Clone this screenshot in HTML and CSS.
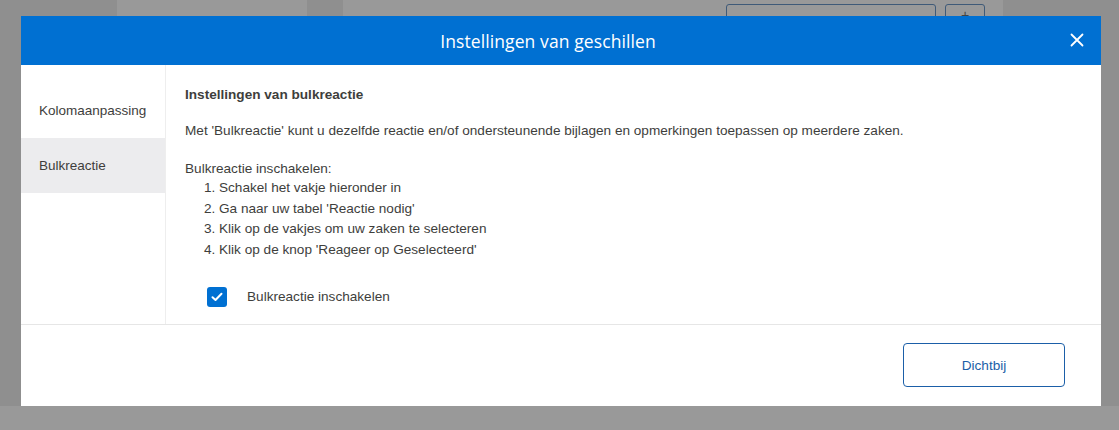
FILE: index.html
```html
<!DOCTYPE html>
<html lang="nl">
<head>
<meta charset="utf-8">
<title>Instellingen van geschillen</title>
<link rel="stylesheet" href="styles.css">
</head>
<body>
<div class="backdrop">
  <div class="strip dark w1"></div>
  <div class="strip light w2"></div>
  <div class="strip dark w3"></div>
  <div class="strip light w4">
    <div class="bg-tools">
      <div class="bg-field"></div>
      <div class="bg-btn"><span class="bg-plus">+</span></div>
    </div>
  </div>
  <div class="strip dark w5"></div>
</div>

<div class="modal" role="dialog" aria-label="Instellingen van geschillen">
  <header class="modal-header">
    <h1 class="modal-title">Instellingen van geschillen</h1>
    <button class="close" aria-label="Sluiten">
      <svg width="14" height="14" viewBox="0 0 14 14"><path d="M1.5 1.5 L12.5 12.5 M12.5 1.5 L1.5 12.5" stroke="#fff" stroke-width="1.8" stroke-linecap="round"/></svg>
    </button>
  </header>
  <div class="modal-body">
    <nav class="sidebar">
      <div class="nav-item">Kolomaanpassing</div>
      <div class="nav-item active">Bulkreactie</div>
    </nav>
    <section class="content">
      <h2 class="content-title">Instellingen van bulkreactie</h2>
      <p class="intro">Met 'Bulkreactie' kunt u dezelfde reactie en/of ondersteunende bijlagen en opmerkingen toepassen op meerdere zaken.</p>
      <p class="steps-title">Bulkreactie inschakelen:</p>
      <ol class="steps">
        <li>Schakel het vakje hieronder in</li>
        <li>Ga naar uw tabel 'Reactie nodig'</li>
        <li>Klik op de vakjes om uw zaken te selecteren</li>
        <li>Klik op de knop 'Reageer op Geselecteerd'</li>
      </ol>
      <label class="check-row">
        <span class="checkbox">
          <svg width="12" height="10" viewBox="0 0 12 10"><path d="M1.5 5.2 L4.5 8 L10.5 1.8" fill="none" stroke="#fff" stroke-width="2" stroke-linecap="round" stroke-linejoin="round"/></svg>
        </span>
        <span class="check-label">Bulkreactie inschakelen</span>
      </label>
    </section>
  </div>
  <footer class="modal-footer">
    <button class="btn-outline">Dichtbij</button>
  </footer>
</div>
</body>
</html>
```
FILE: styles.css
```css
* { box-sizing: border-box; }
html, body { margin: 0; padding: 0; }
body {
  width: 1119px;
  height: 430px;
  overflow: hidden;
  background: #999999;
  font-family: "Liberation Sans", Arial, sans-serif;
  position: relative;
}
.backdrop {
  display: flex;
  height: 406px;
}
.strip { height: 100%; }
.dark { background: #8f8f8f; }
.light { background: #999999; }
.w1 { width: 117px; }
.w2 { width: 190px; }
.w3 { width: 36px; }
.w4 { width: 660px; }
.w5 { flex: 1; }
.bg-tools {
  display: flex;
  gap: 9px;
  padding: 4px 0 0 383px;
}
.bg-field {
  width: 210px;
  height: 30px;
  border: 1px solid #3f5a78;
  border-radius: 3px;
}
.bg-btn {
  width: 40px;
  height: 30px;
  border: 1px solid #3f5a78;
  border-radius: 3px;
  text-align: center;
  color: #444;
  font-size: 14px;
  line-height: 20px;
}
.modal {
  position: absolute;
  top: 16px;
  left: 21px;
  width: 1080px;
  height: 390px;
  background: #fff;
  display: flex;
  flex-direction: column;
}
.modal-header {
  height: 49px;
  background: #0070d2;
  display: flex;
  align-items: center;
  justify-content: center;
  padding-right: 26px;
  position: relative;
}
.modal-title {
  margin: 0;
  font-family: "Open Sans", "Liberation Sans", sans-serif;
  font-weight: 400;
  font-size: 17.5px;
  color: #fff;
  letter-spacing: 0.1px;
}
.close {
  position: absolute;
  right: 17px;
  top: 17px;
  width: 14px;
  height: 14px;
  padding: 0;
  border: 0;
  background: none;
  display: flex;
}
.modal-body {
  display: flex;
  height: 260px;
  border-bottom: 1px solid #e6e6e6;
}
.sidebar {
  width: 145px;
  border-right: 1px solid #eeeeee;
  padding-top: 18px;
}
.nav-item {
  height: 55px;
  display: flex;
  align-items: center;
  padding-left: 18px;
  font-size: 13.5px;
  color: #3e3e3c;
}
.nav-item.active { background: #ececee; }
.content {
  flex: 1;
  padding: 21px 19px 0;
  color: #3e3e3c;
  font-size: 13.6px;
}
.content-title {
  margin: 0 0 18px;
  font-size: 13.6px;
  font-weight: 700;
  line-height: 18px;
}
.intro {
  margin: 0 0 20px;
  line-height: 18px;
}
.steps-title {
  margin: 0;
  line-height: 18px;
}
.steps {
  margin: 0;
  padding-left: 34px;
  line-height: 20.6px;
}
.check-row {
  display: flex;
  align-items: center;
  margin: 27px 0 0 22px;
  gap: 20px;
}
.checkbox {
  width: 20px;
  height: 20px;
  border-radius: 3px;
  background: #0070d2;
  display: flex;
  align-items: center;
  justify-content: center;
}
.check-label { line-height: 18px; }
.modal-footer {
  flex: 1;
  display: flex;
  justify-content: flex-end;
  align-items: flex-start;
  padding: 18px 36px 0 0;
}
.btn-outline {
  width: 162px;
  height: 44px;
  border: 1px solid #1b5fa8;
  border-radius: 4px;
  background: #fff;
  color: #1b5fa8;
  font-family: "Liberation Sans", Arial, sans-serif;
  font-size: 13.6px;
}
```
